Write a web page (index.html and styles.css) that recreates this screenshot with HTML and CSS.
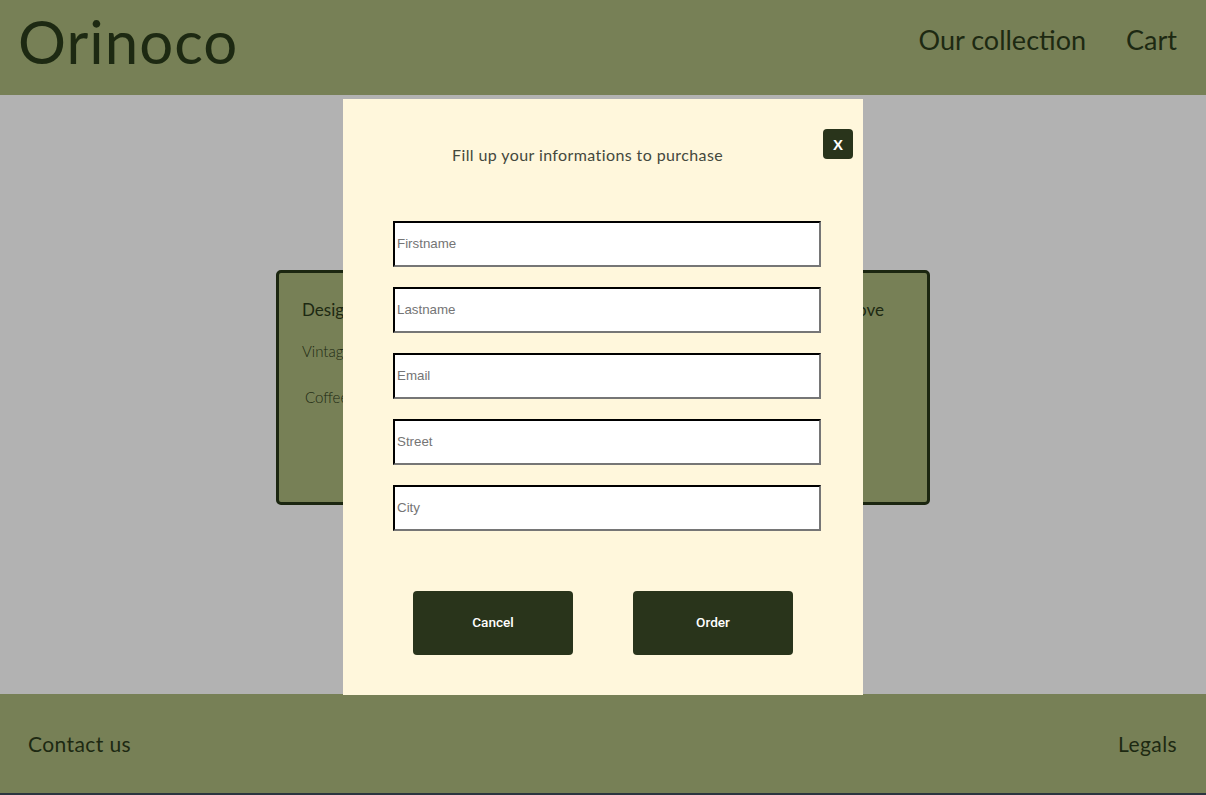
FILE: index.html
```html
<!DOCTYPE html>
<html lang="en">
<head>
<meta charset="utf-8">
<title>Orinoco</title>
<link rel="stylesheet" href="styles.css">
</head>
<body>
<header class="site-header">
  <a class="logo" href="#">Orinoco</a>
  <nav class="nav">
    <a href="#">Our collection</a>
    <a href="#">Cart</a>
  </nav>
</header>
<main class="main">
  <section class="card">
    <div class="card-row">
      <span class="card-title">Designer Teddy</span>
      <span class="card-title">Remove</span>
    </div>
    <p class="card-line">Vintage brown bear</p>
    <p class="card-line card-line-2">Coffee color · 1 item</p>
  </section>
</main>
<footer class="site-footer">
  <a href="#">Contact us</a>
  <a href="#">Legals</a>
</footer>
<div class="below"></div>

<div class="modal">
  <div class="modal-head">
    <p class="modal-title">Fill up your informations to purchase</p>
    <button class="close" type="button">X</button>
  </div>
  <form class="form">
    <input class="field" type="text" placeholder="Firstname">
    <input class="field" type="text" placeholder="Lastname">
    <input class="field" type="email" placeholder="Email">
    <input class="field" type="text" placeholder="Street">
    <input class="field" type="text" placeholder="City">
    <div class="actions">
      <button class="btn" type="button">Cancel</button>
      <button class="btn" type="submit">Order</button>
    </div>
  </form>
</div>
</body>
</html>
```
FILE: styles.css
```css
* { box-sizing: border-box; }
html, body { margin: 0; padding: 0; }
body {
  font-family: Lato, "Noto Sans", sans-serif;
  color: #1d2912;
  background: #2b3540;
  position: relative;
  overflow: hidden;
  height: 795px;
}
a { color: inherit; text-decoration: none; }

.site-header {
  height: 95px;
  background: #778056;
  display: flex;
  align-items: center;
  justify-content: space-between;
  padding: 0 29px 0 18px;
}
.logo {
  font-size: 60px;
  font-weight: 400;
  line-height: 1;
  margin-top: -14px;
  letter-spacing: 1px;
}
.nav {
  display: flex;
  gap: 40px;
  margin-top: -16px;
}
.nav a { font-size: 27px; }

.main {
  height: 599px;
  background: #b2b2b2;
  padding-top: 175px;
}
.card {
  width: 654px;
  height: 235px;
  margin: 0 auto;
  background: #778056;
  border: 3px solid #1b2610;
  border-radius: 5px;
  padding: 26px 43px 0 23px;
}
.card-row {
  display: flex;
  justify-content: space-between;
}
.card-title { font-size: 17px; }
.card-line {
  margin: 22px 0 0;
  font-size: 15px;
  font-weight: 300;
}
.card-line-2 { margin-top: 28px; padding-left: 3px; }

.site-footer {
  height: 99px;
  background: #778056;
  display: flex;
  align-items: center;
  justify-content: space-between;
  padding: 0 29px 0 28px;
  font-size: 21px;
  letter-spacing: 0.4px;
}
.below { height: 40px; background: #2b3540; }

.modal {
  position: absolute;
  top: 99px;
  left: 50%;
  transform: translateX(-50%);
  width: 520px;
  height: 596px;
  background: #fff7dc;
}
.modal-head {
  display: flex;
  align-items: flex-start;
  padding: 30px 10px 0 109px;
}
.modal-title {
  margin: 16px 0 0;
  font-size: 16px;
  letter-spacing: 0.4px;
  color: #44483d;
}
.close {
  margin-left: auto;
  width: 30px;
  height: 30px;
  border: 0;
  border-radius: 4px;
  background: #29341b;
  color: #fff;
  font-family: "Liberation Sans", Arial, sans-serif;
  font-weight: 700;
  font-size: 15px;
  padding: 0;
}
.form {
  display: flex;
  flex-direction: column;
  gap: 20px;
  padding: 57px 0 0 50px;
}
.field {
  width: 428px;
  height: 46px;
  border: 2px inset #767676;
  border-top-color: #1d1d1d;
  border-left-color: #1d1d1d;
  border-right-color: #767676;
  border-bottom-color: #767676;
  background: #fff;
  padding: 0 2px 2px;
  font-family: "Liberation Sans", Arial, sans-serif;
  font-size: 13.33px;
  color: #222;
  margin: 0;
}
.field::placeholder { color: #757575; }
.actions {
  display: flex;
  gap: 60px;
  margin: 40px 0 0 20px;
}
.btn {
  width: 160px;
  height: 64px;
  border: 0;
  border-radius: 4px;
  background: #29341b;
  color: #fff;
  font-family: Roboto, sans-serif;
  font-weight: 500;
  font-size: 13.6px;
  padding: 0 0 2px;
}
```
